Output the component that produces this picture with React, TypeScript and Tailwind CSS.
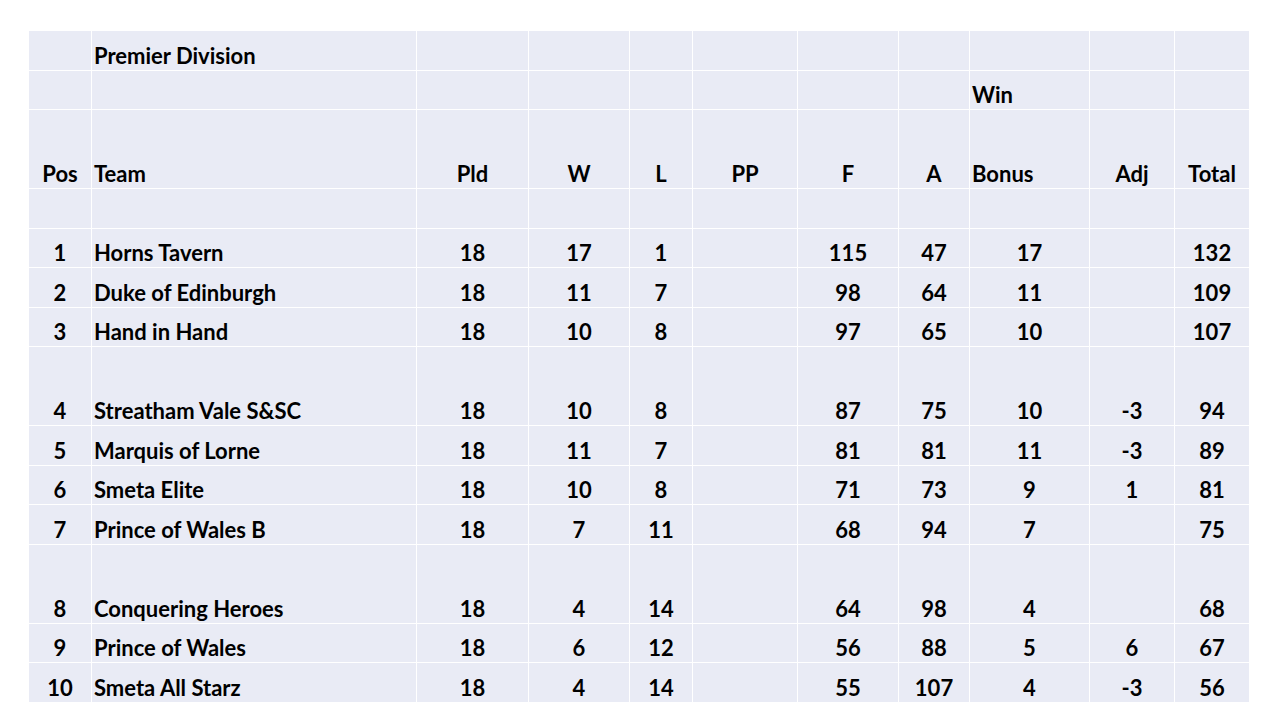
import React from 'react';

type Row = {
  pos?: string;
  team?: string;
  pld?: string;
  w?: string;
  l?: string;
  pp?: string;
  f?: string;
  a?: string;
  bonus?: string;
  adj?: string;
  total?: string;
  tall?: boolean;
};

const rows: Row[] = [
  {},
  { pos: '1', team: 'Horns Tavern', pld: '18', w: '17', l: '1', f: '115', a: '47', bonus: '17', total: '132' },
  { pos: '2', team: 'Duke of Edinburgh', pld: '18', w: '11', l: '7', f: '98', a: '64', bonus: '11', total: '109' },
  { pos: '3', team: 'Hand in Hand', pld: '18', w: '10', l: '8', f: '97', a: '65', bonus: '10', total: '107' },
  { pos: '4', team: 'Streatham Vale S&SC', pld: '18', w: '10', l: '8', f: '87', a: '75', bonus: '10', adj: '-3', total: '94', tall: true },
  { pos: '5', team: 'Marquis of Lorne', pld: '18', w: '11', l: '7', f: '81', a: '81', bonus: '11', adj: '-3', total: '89' },
  { pos: '6', team: 'Smeta Elite', pld: '18', w: '10', l: '8', f: '71', a: '73', bonus: '9', adj: '1', total: '81' },
  { pos: '7', team: 'Prince of Wales B', pld: '18', w: '7', l: '11', f: '68', a: '94', bonus: '7', total: '75' },
  { pos: '8', team: 'Conquering Heroes', pld: '18', w: '4', l: '14', f: '64', a: '98', bonus: '4', total: '68', tall: true },
  { pos: '9', team: 'Prince of Wales', pld: '18', w: '6', l: '12', f: '56', a: '88', bonus: '5', adj: '6', total: '67' },
  { pos: '10', team: 'Smeta All Starz', pld: '18', w: '4', l: '14', f: '55', a: '107', bonus: '4', adj: '-3', total: '56' },
];

const widths = [63, 325, 112, 101, 63, 105, 101, 71, 120, 85, 75];

const cell = 'border border-white align-bottom px-[2px] pb-[1px] leading-[26px]';

export default function App() {
  return (
    <div className="w-[1280px] h-[720px] bg-white pt-[30px] pl-[28px]" style={{ fontFamily: 'Lato, "Open Sans", sans-serif' }}>
      <table className="table-fixed border-collapse bg-[#e9ebf5] text-black font-bold text-[22px]">
        <colgroup>
          {widths.map((w, i) => (
            <col key={i} style={{ width: w }} />
          ))}
        </colgroup>
        <tbody>
          <tr className="h-[39.5px]">
            <td className={cell}></td>
            <td className={cell}>Premier Division</td>
            {Array.from({ length: 9 }).map((_, i) => (
              <td key={i} className={cell}></td>
            ))}
          </tr>
          <tr className="h-[39.5px]">
            {Array.from({ length: 8 }).map((_, i) => (
              <td key={i} className={cell}></td>
            ))}
            <td className={cell}>Win</td>
            <td className={cell}></td>
            <td className={cell}></td>
          </tr>
          <tr className="h-[79px]">
            <td className={`${cell} text-center`}>Pos</td>
            <td className={cell}>Team</td>
            <td className={`${cell} text-center`}>Pld</td>
            <td className={`${cell} text-center`}>W</td>
            <td className={`${cell} text-center`}>L</td>
            <td className={`${cell} text-center`}>PP</td>
            <td className={`${cell} text-center`}>F</td>
            <td className={`${cell} text-center`}>A</td>
            <td className={cell}>Bonus</td>
            <td className={`${cell} text-center`}>Adj</td>
            <td className={`${cell} text-center`}>Total</td>
          </tr>
          {rows.map((r, i) => (
            <tr key={i} className={r.tall ? 'h-[79px]' : 'h-[39.5px]'}>
              <td className={`${cell} text-center`}>{r.pos}</td>
              <td className={cell}>{r.team}</td>
              <td className={`${cell} text-center`}>{r.pld}</td>
              <td className={`${cell} text-center`}>{r.w}</td>
              <td className={`${cell} text-center`}>{r.l}</td>
              <td className={`${cell} text-center`}>{r.pp}</td>
              <td className={`${cell} text-center`}>{r.f}</td>
              <td className={`${cell} text-center`}>{r.a}</td>
              <td className={`${cell} text-center`}>{r.bonus}</td>
              <td className={`${cell} text-center`}>{r.adj}</td>
              <td className={`${cell} text-center`}>{r.total}</td>
            </tr>
          ))}
        </tbody>
      </table>
    </div>
  );
}
